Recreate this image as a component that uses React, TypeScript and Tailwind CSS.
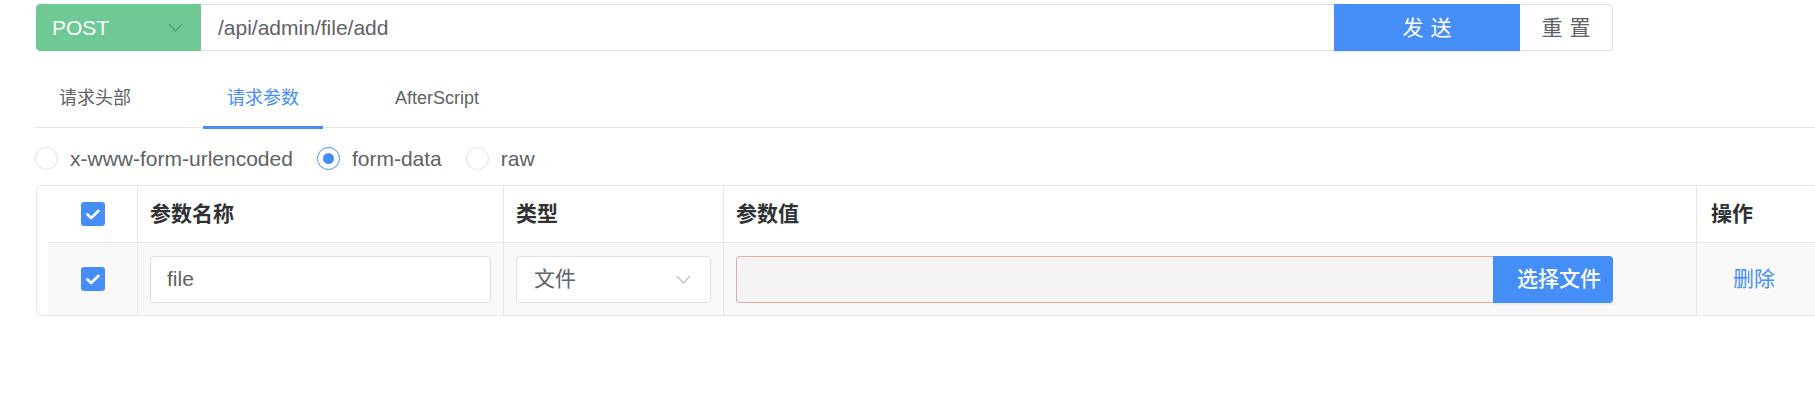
import React from "react";

const Chevron = ({ color }: { color: string }) => (
  <svg width="15" height="9" viewBox="0 0 15 9" fill="none">
    <polyline points="1,1 7.5,8 14,1" stroke={color} strokeWidth="1.3" fill="none" />
  </svg>
);

const Check = () => (
  <div className="flex h-[24px] w-[24px] items-center justify-center rounded-[3px] bg-[#458ef7]">
    <svg width="14" height="11" viewBox="0 0 14 11" fill="none">
      <polyline points="1.5,5.5 5.2,9 12.5,1.8" stroke="#ffffff" strokeWidth="2.6" fill="none" strokeLinecap="round" strokeLinejoin="round" />
    </svg>
  </div>
);

const Radio = ({ checked, label }: { checked?: boolean; label: string }) => (
  <div className="flex items-center gap-[12px]">
    {checked ? (
      <div className="flex h-[23px] w-[23px] items-center justify-center rounded-full border-[1.5px] border-[#458ef7] bg-white">
        <div className="h-[11px] w-[11px] rounded-full bg-[#458ef7]" />
      </div>
    ) : (
      <div className="h-[23px] w-[23px] rounded-full border border-[#dcdfe6] bg-white" />
    )}
    <span className="text-[21px] leading-none text-[#606266]">{label}</span>
  </div>
);

export default function App() {
  return (
    <div className="w-full overflow-hidden bg-white pb-[40px] pt-[4px] font-['Liberation_Sans','Noto_Sans_CJK_SC',sans-serif]">
      {/* request bar */}
      <div className="ml-[36px] flex h-[47px] w-[1577px]">
        <div className="flex w-[165px] items-center justify-between rounded-l-[4px] border border-[#6fc994] bg-[#6fc994] pl-[15px] pr-[17px] text-[21px] text-white">
          <span>POST</span>
          <Chevron color="#4f9e70" />
        </div>
        <div className="flex flex-1 items-center border-y border-[#dcdfe6] pl-[17px] text-[21px] text-[#606266]">
          /api/admin/file/add
        </div>
        <div className="flex w-[186px] items-center justify-center bg-[#458ef7] pl-[7px] text-[21px] tracking-[7px] text-white shadow-[0_2px_2px_rgba(0,0,0,0.06)]">
          发送
        </div>
        <div className="flex w-[93px] items-center justify-center rounded-r-[4px] border border-l-0 border-[#dcdfe6] pl-[7px] text-[21px] tracking-[7px] text-[#606266]">
          重置
        </div>
      </div>

      {/* tabs */}
      <div className="ml-[35px] mt-[22px] flex gap-[48px] border-b border-[#e4e7ed]">
        <div className="flex h-[54px] items-center px-[24px] pb-[4px] text-[18px] text-[#606266]">请求头部</div>
        <div className="relative flex h-[54px] items-center px-[24px] pb-[4px] text-[18px] text-[#458ef7]">
          请求参数
          <div className="absolute bottom-[-2px] left-0 right-0 h-[3px] bg-[#458ef7]" />
        </div>
        <div className="flex h-[54px] items-center px-[24px] pb-[4px] text-[18px] text-[#606266]">AfterScript</div>
      </div>

      {/* body type */}
      <div className="ml-[35px] mt-[19px] flex h-[23px] items-center gap-[24px]">
        <Radio label="x-www-form-urlencoded" />
        <Radio checked label="form-data" />
        <Radio label="raw" />
      </div>

      {/* table */}
      <div className="ml-[36px] mt-[15px] w-max rounded-l-[6px] border border-r-0 border-[#e6e6e6] pl-[11px]">
        <div className="grid h-[57px] grid-cols-[90px_366px_220px_973px_150px] border-b border-[#e6e6e6] text-[21px] font-bold text-[#303133]">
          <div className="flex items-center justify-center border-r border-[#e6e6e6]">
            <Check />
          </div>
          <div className="flex items-center border-r border-[#e6e6e6] pl-[12px]">参数名称</div>
          <div className="flex items-center border-r border-[#e6e6e6] pl-[12px]">类型</div>
          <div className="flex items-center border-r border-[#e6e6e6] pl-[12px]">参数值</div>
          <div className="flex items-center pl-[14px]">操作</div>
        </div>
        <div className="grid h-[72px] grid-cols-[90px_366px_220px_973px_150px] bg-[#f9f9f9] text-[21px] text-[#606266]">
          <div className="flex items-center justify-center border-r border-[#e6e6e6]">
            <Check />
          </div>
          <div className="flex items-center border-r border-[#e6e6e6] pl-[12px]">
            <div className="flex h-[47px] w-[341px] items-center rounded-[4px] border border-[#dcdfe6] bg-white pl-[16px]">file</div>
          </div>
          <div className="flex items-center border-r border-[#e6e6e6] pl-[12px]">
            <div className="flex h-[47px] w-[195px] items-center justify-between rounded-[4px] border border-[#dcdfe6] bg-white pl-[17px] pr-[19px]">
              <span>文件</span>
              <Chevron color="#c0c4cc" />
            </div>
          </div>
          <div className="flex items-center border-r border-[#e6e6e6] pl-[12px]">
            <div className="flex h-[47px] w-[877px]">
              <div className="flex-1 rounded-l-[4px] border border-r-0 border-[#e3aaaa] bg-[#f4f4f4]" />
              <div className="flex w-[120px] items-center rounded-r-[4px] bg-[#458ef7] pl-[24px] font-medium text-white shadow-[0_2px_2px_rgba(0,0,0,0.06)]">
                选择文件
              </div>
            </div>
          </div>
          <div className="flex items-center pl-[36px] text-[#458ef7]">删除</div>
        </div>
      </div>
    </div>
  );
}
